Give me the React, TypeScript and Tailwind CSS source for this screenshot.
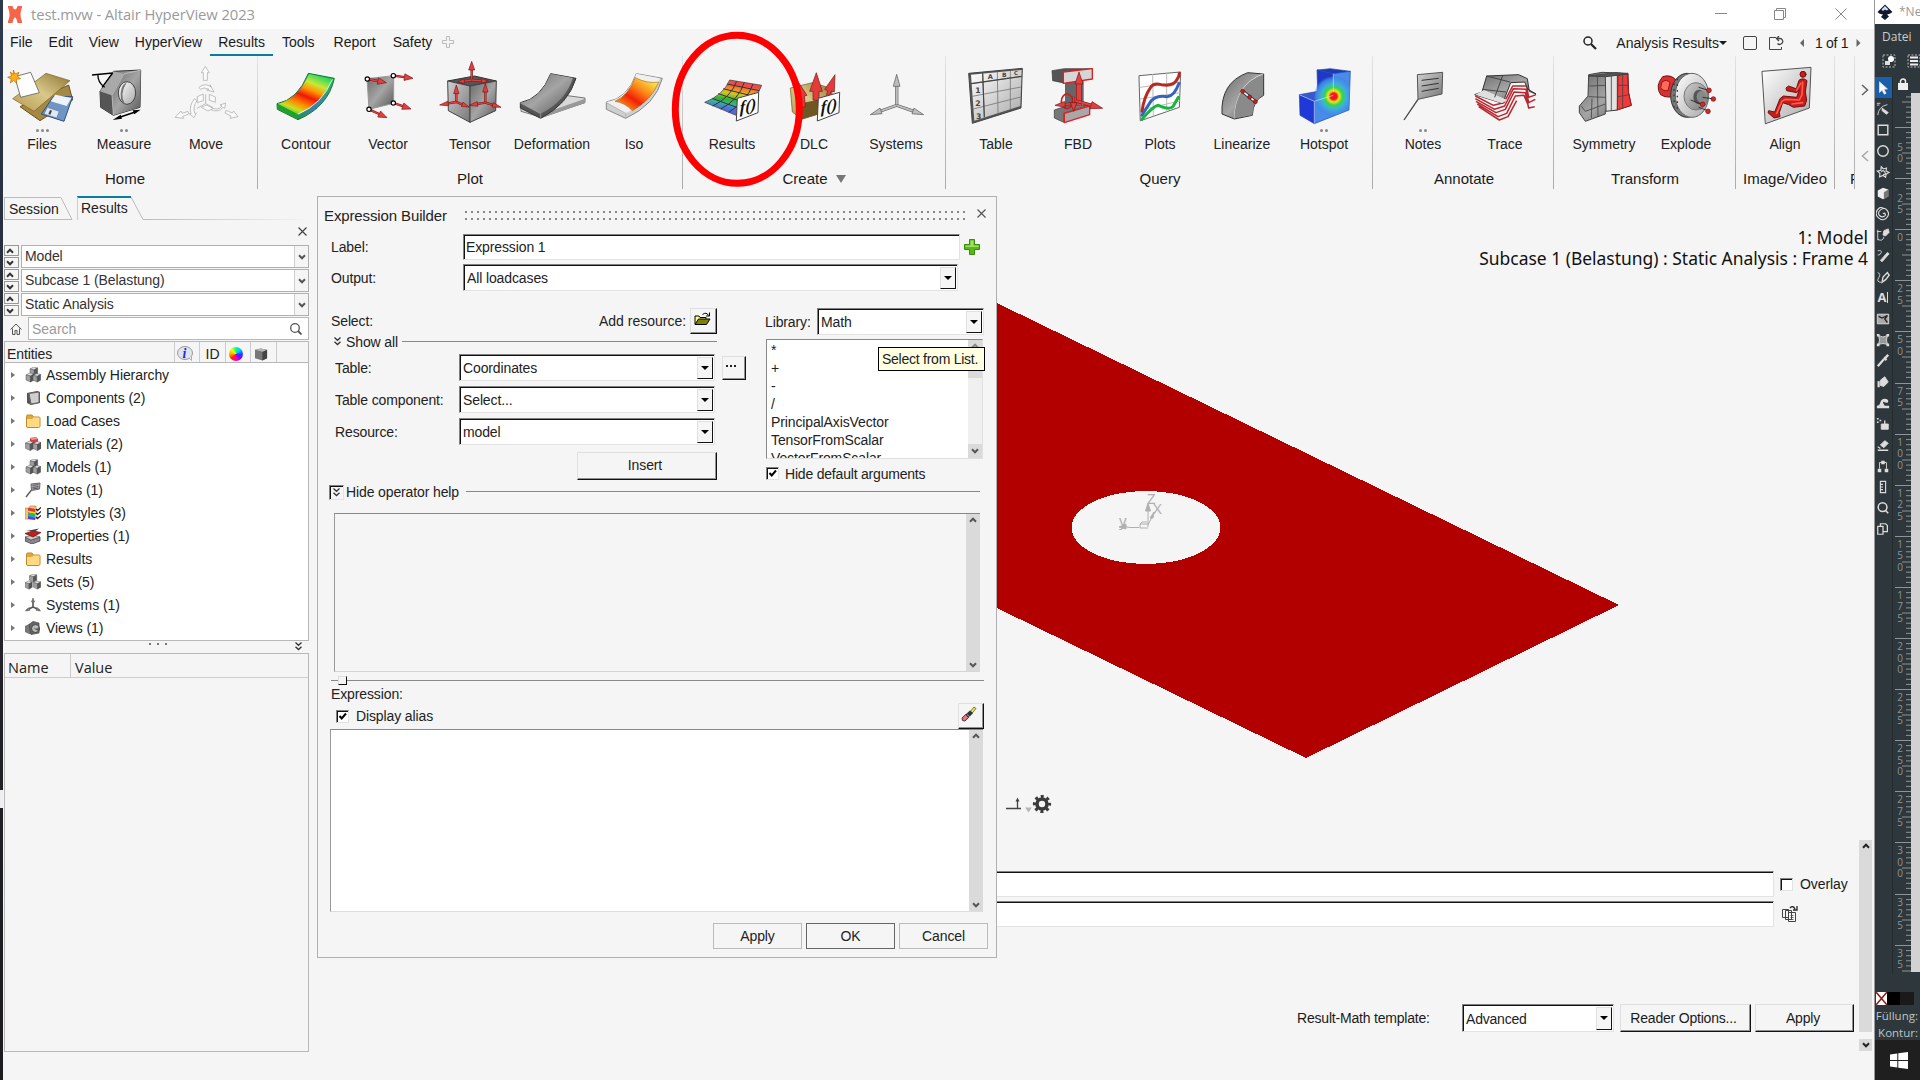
import React from "react";

type Kids = { children?: React.ReactNode };

/* ---------- shared controls ---------- */

const sunken =
  "border border-t-[#808080] border-l-[#808080] border-r-[#e3e3e3] border-b-[#e3e3e3] shadow-[inset_1px_1px_0_#111]";
const raised =
  "border border-t-[#e0e0e0] border-l-[#e0e0e0] border-r-[#111] border-b-[#111] shadow-[inset_-1px_-1px_0_#909090]";

function Caret({ className = "" }: { className?: string }) {
  return (
    <svg className={className} width="8" height="4" viewBox="0 0 8 4">
      <path d="M0 0h8L4 4z" fill="currentColor" />
    </svg>
  );
}

function Combo({ className, text }: { className: string; text: string }) {
  return (
    <div className={`flex bg-white pt-[2px] pl-[3px] pr-px pb-px text-[#222] ${sunken} ${className}`}>
      <div className="flex flex-1 items-center">{text}</div>
      <div className="flex w-[16px] items-center justify-center border border-[#e0e0e0] border-r-[#111] border-b-[#111] bg-[#f5f5f5] pr-px text-black">
        <Caret className="-mt-px" />
      </div>
    </div>
  );
}

function Chevron({ up = false, color = "#555" }: { up?: boolean; color?: string }) {
  return (
    <svg width="8" height="6" viewBox="0 0 9 7" className={up ? "" : "rotate-180"}>
      <path d="M1 5.500L4.500 2L8 5.500" fill="none" stroke={color} strokeWidth="2.300" />
    </svg>
  );
}

function ScrollBar() {
  return (
    <div className="flex w-[14px] shrink-0 flex-col items-center justify-between bg-[#dadada] py-[3px]">
      <Chevron up />
      <Chevron />
    </div>
  );
}

function CheckBox({ checked = true }: { checked?: boolean }) {
  return (
    <div className={`flex size-[13px] shrink-0 items-center justify-center bg-white ${sunken}`}>
      {checked && (
        <svg width="9" height="9" viewBox="0 0 9 9">
          <path d="M1.500 4L3.700 6.500L8 1.500" fill="none" stroke="#000" strokeWidth="2" />
        </svg>
      )}
    </div>
  );
}

function DoubleChevron() {
  return (
    <svg width="7" height="9" viewBox="0 0 7 9">
      <path d="M0.500 0.500L3.500 3.300L6.500 0.500M0.500 4.800L3.500 7.600L6.500 4.800" fill="none" stroke="#333" strokeWidth="1.300" />
    </svg>
  );
}

/* ---------- ribbon drawings ---------- */

function Defs() {
  return (
    <svg className="absolute size-0">
      <defs>
        <linearGradient id="steel" x1="0" y1="0" x2="1" y2="1">
          <stop offset="0" stopColor="#6a6a6a" />
          <stop offset="0.500" stopColor="#a5a5a5" />
          <stop offset="1" stopColor="#555" />
        </linearGradient>
        <linearGradient id="pale" x1="0" y1="0" x2="1" y2="1">
          <stop offset="0" stopColor="#fff" />
          <stop offset="1" stopColor="#a8a8a8" />
        </linearGradient>
        <linearGradient id="grey" x1="0" y1="0" x2="1" y2="1">
          <stop offset="0" stopColor="#d0d0d0" />
          <stop offset="1" stopColor="#777" />
        </linearGradient>
        <linearGradient id="manila" x1="0" y1="1" x2="1" y2="0">
          <stop offset="0" stopColor="#b89a4e" />
          <stop offset="0.500" stopColor="#d8c88a" />
          <stop offset="1" stopColor="#8f7430" />
        </linearGradient>
        <linearGradient id="heat" x1="0.150" y1="1" x2="0.700" y2="0">
          <stop offset="0" stopColor="#28b428" />
          <stop offset="0.180" stopColor="#c8e020" />
          <stop offset="0.320" stopColor="#f80" />
          <stop offset="0.500" stopColor="#f01808" />
          <stop offset="0.660" stopColor="#f90" />
          <stop offset="0.800" stopColor="#c8e838" />
          <stop offset="1" stopColor="#30d860" />
        </linearGradient>
        <linearGradient id="warm" x1="0" y1="1" x2="0.900" y2="0">
          <stop offset="0" stopColor="#ffd820" />
          <stop offset="0.400" stopColor="#f02008" />
          <stop offset="0.650" stopColor="#ff8a18" />
          <stop offset="1" stopColor="#f0ff60" />
        </linearGradient>
        <linearGradient id="rim" x1="0" y1="1" x2="1" y2="0">
          <stop offset="0" stopColor="#10a010" />
          <stop offset="0.500" stopColor="#3a80c0" />
          <stop offset="1" stopColor="#20c040" />
        </linearGradient>
        <linearGradient id="rainbow" x1="0.300" y1="1" x2="0.550" y2="0">
          <stop offset="0" stopColor="#5a5ae8" />
          <stop offset="0.200" stopColor="#5070d8" />
          <stop offset="0.340" stopColor="#38b0a0" />
          <stop offset="0.450" stopColor="#30b030" />
          <stop offset="0.620" stopColor="#d0c820" />
          <stop offset="0.780" stopColor="#f08030" />
          <stop offset="0.880" stopColor="#f04848" />
          <stop offset="1" stopColor="#f05050" />
        </linearGradient>
        <radialGradient id="spot" gradientUnits="userSpaceOnUse" cx="1178" cy="289" r="62">
          <stop offset="0.150" stopColor="#f01818" />
          <stop offset="0.270" stopColor="#f8e020" />
          <stop offset="0.430" stopColor="#30d848" />
          <stop offset="0.600" stopColor="#40b0d8" />
          <stop offset="0.850" stopColor="#4090e8" stopOpacity="0.800" />
          <stop offset="1" stopColor="#3a78e8" stopOpacity="0" />
        </radialGradient>
      </defs>
    </svg>
  );
}

/* Arrow with a shaft from (x1,y1) to a cone tip at (x2,y2) */
function Arrow({ x1, y1, x2, y2, w = 16, l = 26, s = 5, fill = "#e04040", edge = "#7a1515" }: {
  x1: number; y1: number; x2: number; y2: number; w?: number; l?: number; s?: number; fill?: string; edge?: string;
}) {
  const d = Math.hypot(x2 - x1, y2 - y1);
  const ux = (x2 - x1) / d;
  const uy = (y2 - y1) / d;
  const bx = x2 - ux * l;
  const by = y2 - uy * l;
  const h = w / 2;
  return (
    <g>
      <path d={`M${x1} ${y1}L${bx} ${by}`} stroke={edge} strokeWidth={s + 2} />
      <path d={`M${x1} ${y1}L${bx} ${by}`} stroke={fill} strokeWidth={s - 1} />
      <path
        d={`M${x2} ${y2}L${bx - uy * h} ${by + ux * h}L${bx + uy * h} ${by - ux * h}Z`}
        fill={fill}
        stroke={edge}
        strokeWidth="2"
      />
    </g>
  );
}

function FnCard({ x, y }: { x: number; y: number }) {
  return (
    <g transform={`translate(${x} ${y})`}>
      <path d="M1 14L65 -4L63 57L-2 82Z" fill="#fff" stroke="#444" strokeWidth="3" />
      <text x="8" y="61" transform="skewY(-14)" fontFamily="Liberation Serif" fontStyle="italic" fontWeight="bold" fontSize="50" fill="#111">
        f()
      </text>
    </g>
  );
}

const art: Record<string, { x: number; el: React.ReactNode }> = {
  Files: {
    x: 6,
    el: (
      <g strokeLinejoin="round">
        <path d="M60 320L120 362L218 300L206 255Z" fill="#a58842" stroke="#6b5422" strokeWidth="3" />
        <path d="M38 296L138 220L210 242L102 334Z" fill="url(#manila)" stroke="#7a6228" strokeWidth="2" />
        <path d="M160 290L218 290L192 364L124 342Z" fill="#6f95c4" stroke="#2f4f80" strokeWidth="3" />
        <path d="M166 284L214 294L200 318L152 304Z" fill="#eef3fa" />
        <path d="M142 322L178 334L170 354L132 342Z" fill="#e0e8f2" stroke="#55749c" strokeWidth="2" />
        <path d="M150 330L156 332L151 344L145 342Z" fill="#444" />
        <path d="M44 230L92 217L118 278L62 292Z" fill="#fff" stroke="#777" strokeWidth="3" />
        <path d="M40 210l5 12 12-5-5 12 10 7-13 2 1 12-9-9-10 8 3-12-11-5 12-4-4-12 9 7z" fill="#ffae1a" stroke="#b56a00" strokeWidth="2" />
      </g>
    ),
  },
  Measure: {
    x: 252,
    el: (
      <g strokeLinejoin="round">
        <path d="M300 274L340 214L422 210L420 322L340 346L302 322Z" fill="url(#steel)" stroke="#333" strokeWidth="3" />
        <path d="M300 274L336 286L340 346L302 322Z" fill="#555" />
        <path d="M336 286L372 222L422 210L420 322L340 346Z" fill="url(#steel)" />
        <path d="M336 286L372 222L422 210M336 286L340 346" fill="none" stroke="#ccc" strokeWidth="2" />
        <path d="M340 214L372 222L336 286L300 274Z" fill="#a9a9a9" />
        <ellipse cx="381" cy="279" rx="26" ry="34" fill="url(#pale)" stroke="#444" strokeWidth="3" />
        <path d="M381 246q-24 12-18 52 4 12 12 14-18-30 6-66z" fill="#777" />
        <path d="M276 225L338 219M294 224Q292 246 314 262M338 219L306 262" fill="none" stroke="#000" strokeWidth="4" />
        <path d="M352 354L408 335" stroke="#000" strokeWidth="5" />
        <path d="M338 360l24-16 4 12zM422 329l-24 2 5 12z" />
      </g>
    ),
  },
  Move: {
    x: 498,
    el: (
      <g fill="#fafafa" stroke="#b5b5b5" strokeWidth="2.500" strokeLinejoin="round">
        <path d="M616 199l12 19h-6v23h-12v-23h-6z" />
        <path d="M525 352l18-19 3 7 18-6 2 8-18 7 3 6z" />
        <path d="M714 350l-13-17-4 6-19-8-3 8 18 9-3 7z" />
        <path d="M597 262q18-15 36-1l-3-7 12 22-22-6 7-2q-14-8-26 0z" />
        <path d="M584 296q-18 20-11 46l-5-1 14 12 7-14-5 1q-6-20 7-38z" />
        <path d="M632 322q22 12 34-4l-6-3 17-6-3 16-5-3q-14 18-40 6z" />
        <path d="M592 290l18-8v20l-18 6zM628 283l18 8v16l-18-6zM604 322l16-7 20 10-16 8z" />
        <path d="M617 283v28l-26 14M617 311l22 12" fill="none" />
      </g>
    ),
  },
  Contour: {
    x: 798,
    el: (
      <g strokeLinejoin="round">
        <path d="M831 311Q893 300 925 220L1003 235Q985 320 894 359L832 328Z" fill="url(#rim)" stroke="#1a7a2a" strokeWidth="3" />
        <path d="M833 311Q893 300 927 222L995 237Q968 312 893 343Z" fill="url(#heat)" />
        <path d="M893 343Q968 312 997 238" fill="none" stroke="#fff" strokeWidth="3" opacity="0.850" />
        <path d="M832 314L893 343V358L832 328Z" fill="#20a030" />
      </g>
    ),
  },
  Vector: {
    x: 1041,
    el: (
      <g>
        <path d="M1098 236L1178 227V310L1104 328Z" fill="url(#steel)" stroke="#999" strokeWidth="3" />
        <Arrow x1={1100} y1={237} x2={1156} y2={248} w={20} />
        <Arrow x1={1178} y1={227} x2={1236} y2={235} w={20} />
        <Arrow x1={1104} y1={328} x2={1158} y2={353} w={20} />
        <Arrow x1={1178} y1={309} x2={1230} y2={327} w={20} />
        <g fill="#fff" stroke="#000" strokeWidth="3.500">
          <circle cx="1099" cy="237" r="6.500" />
          <circle cx="1177" cy="227" r="6.500" />
          <circle cx="1104" cy="328" r="6.500" />
          <circle cx="1177" cy="309" r="6.500" />
        </g>
      </g>
    ),
  },
  Tensor: {
    x: 1287,
    el: (
      <g strokeLinejoin="round">
        <path d="M1340 243L1420 228L1486 243L1407 258Z" fill="#555" stroke="#333" strokeWidth="3" />
        <path d="M1340 243L1407 258V367L1342 332Z" fill="url(#grey)" stroke="#444" strokeWidth="3" />
        <path d="M1407 258L1486 243L1484 332L1407 367Z" fill="url(#steel)" stroke="#444" strokeWidth="3" />
        <Arrow x1={1412} y1={242} x2={1412} y2={184} w={18} />
        <Arrow x1={1412} y1={240} x2={1370} y2={246} w={14} l={20} />
        <Arrow x1={1412} y1={240} x2={1462} y2={244} w={14} l={20} />
        <Arrow x1={1366} y1={308} x2={1366} y2={255} w={16} />
        <Arrow x1={1366} y1={306} x2={1316} y2={315} w={14} />
        <Arrow x1={1366} y1={306} x2={1404} y2={321} w={14} l={22} />
        <Arrow x1={1453} y1={308} x2={1453} y2={250} w={16} />
        <Arrow x1={1453} y1={308} x2={1404} y2={316} w={14} />
        <Arrow x1={1453} y1={308} x2={1500} y2={322} w={14} />
      </g>
    ),
  },
  Deformation: {
    x: 93,
    el: (
      <g strokeLinejoin="round">
        <path d="M120 318L245 285L312 294V308L182 352L120 334Z" fill="#d8d8d8" stroke="#777" strokeWidth="3" />
        <path d="M182 342L312 296V308L182 354Z" fill="#999" />
        <path d="M118 308Q180 296 209 221L285 235Q262 312 179 355L118 324Z" fill="#555" stroke="#333" strokeWidth="3" />
        <path d="M118 308Q180 296 209 221L276 234Q252 306 179 341Z" fill="url(#steel)" />
        <path d="M118 309L179 341V355" fill="none" stroke="#aaa" strokeWidth="2" />
      </g>
    ),
  },
  Iso: {
    x: 339,
    el: (
      <g strokeLinejoin="round">
        <path d="M376 306Q440 296 466 221L544 235Q524 314 434 355L376 328Z" fill="#cfcfcf" stroke="#888" strokeWidth="3" />
        <path d="M376 306Q440 296 466 221L537 235Q510 306 434 340Z" fill="#f0f0f0" />
        <path d="M402 304Q442 286 463 233Q500 252 533 246Q512 300 454 332Q432 308 402 304Z" fill="url(#warm)" stroke="#b86a10" strokeWidth="2" />
        <path d="M376 308L434 340V355" fill="none" stroke="#aaa" strokeWidth="2" />
      </g>
    ),
  },
  Results: {
    x: 636,
    el: (
      <g>
        <path d="M674 307Q730 285 749 240L845 256Q826 310 768 346Z" fill="url(#rainbow)" stroke="#333" strokeWidth="2" />
        <path
          d="M698 318Q752 292 770 244M722 327Q776 300 793 247M746 337Q800 305 819 252M697 295Q740 312 786 327M715 281Q760 298 806 309M730 266Q776 278 826 290M741 252L838 272"
          fill="none"
          stroke="#333"
          strokeWidth="3"
        />
        <FnCard x={771} y={281} />
      </g>
    ),
  },
  DLC: {
    x: 885,
    el: (
      <g strokeLinejoin="round">
        <path d="M934 264L1000 248L1060 266L1056 330L968 358L940 336Z" fill="url(#manila)" stroke="#6b5422" strokeWidth="2" />
        <path d="M968 310L1030 296V340L968 358Z" fill="#6e5722" />
        <path d="M1002 300v-26h-10l20-56 18 56h-10v28z" fill="#e23b3b" stroke="#7a1515" strokeWidth="2" />
        <path d="M1042 288l4-16-9-4 31-44-2 52-9-3-4 14z" fill="#e23b3b" stroke="#7a1515" strokeWidth="2" />
        <path d="M966 322l-4-36-10 2-2-54 34 52-8 2 3 32z" fill="#e23b3b" stroke="#7a1515" strokeWidth="2" />
        <FnCard x={1017} y={281} />
      </g>
    ),
  },
  Systems: {
    x: 1128,
    el: (
      <g>
        <Arrow x1={1250} y1={316} x2={1250} y2={223} w={20} l={36} s={8} fill="#bdbdbd" edge="#555" />
        <Arrow x1={1250} y1={316} x2={1171} y2={344} w={18} l={34} s={7} fill="#bdbdbd" edge="#555" />
        <Arrow x1={1250} y1={316} x2={1331} y2={344} w={18} l={34} s={7} fill="#bdbdbd" edge="#555" />
      </g>
    ),
  },
  Table: {
    x: 48,
    el: (
      <g strokeLinejoin="round">
        <path d="M86 220L247 205L243 324L97 370Z" fill="#555" stroke="#444" strokeWidth="3" />
        <path d="M93 224L245 210L241 318L103 362Z" fill="url(#pale)" />
        <path
          d="M94 251L245 229M97 289L243 261M100 327L242 291M128 220L133 352M172 216L174 341M211 213L211 328"
          stroke="#777"
          strokeWidth="2.500"
          fill="none"
        />
        <path d="M94 251L245 229M128 220L133 352" stroke="#444" strokeWidth="3.500" />
        <g fontFamily="DejaVu Sans" fontWeight="bold" fill="#444">
          <text x="143" y="238" fontSize="20">A</text>
          <text x="186" y="232" fontSize="18">B</text>
          <text x="222" y="226" fontSize="16">C</text>
          <text x="106" y="279" fontSize="23">1</text>
          <text x="106" y="318" fontSize="23">2</text>
          <text x="108" y="357" fontSize="23">3</text>
        </g>
      </g>
    ),
  },
  FBD: {
    x: 291,
    el: (
      <g strokeLinejoin="round">
        <path d="M372 246L398 242L428 240V312L372 318Z" fill="#666" />
        <path d="M333 212L370 206L455 206L368 216V249L335 242Z" fill="#555" stroke="#333" strokeWidth="2" />
        <path d="M367 216L454 206V237L367 250Z" fill="#d6d6d6" stroke="#e02020" strokeWidth="4" />
        <path d="M340 330L376 318L448 314L368 340V367L340 354Z" fill="#777" stroke="#333" strokeWidth="2" />
        <path d="M370 340L446 318V344L370 368Z" fill="#a8a8a8" stroke="#e02020" strokeWidth="4" />
        <ellipse cx="378" cy="304" rx="17" ry="22" fill="none" stroke="#c02020" strokeWidth="5" />
        <Arrow x1={414} y1={316} x2={414} y2={216} w={24} l={36} s={15} />
        <Arrow x1={405} y1={303} x2={485} y2={325} w={22} l={36} s={8} />
        <Arrow x1={405} y1={310} x2={342} y2={316} w={18} l={30} s={6} />
        <Arrow x1={398} y1={290} x2={398} y2={334} w={20} l={26} s={6} />
      </g>
    ),
  },
  Plots: {
    x: 540,
    el: (
      <g strokeLinejoin="round" strokeLinecap="round">
        <path d="M598 227L722 216L718 322L602 362Z" fill="#fff" stroke="#666" strokeWidth="3" />
        <path d="M600 262L720 246M601 297L720 278M602 330L719 303M638 223L640 348M680 219L680 334" stroke="#bbb" strokeWidth="3" fill="none" />
        <g fill="none">
          <path d="M606 334Q612 290 632 262Q640 248 664 254Q700 260 710 240Q718 230 718 220" stroke="#b82a20" strokeWidth="9" />
          <path d="M606 346Q622 320 634 302Q652 284 682 290Q702 290 717 250" stroke="#3464c0" strokeWidth="9" />
          <path d="M606 358Q640 318 655 316Q690 332 700 318L715 292" stroke="#18b440" strokeWidth="9" />
        </g>
      </g>
    ),
  },
  Linearize: {
    x: 783,
    el: (
      <g strokeLinejoin="round">
        <path d="M843 342Q838 248 920 218L968 222V286Q936 300 934 346L880 357Z" fill="url(#steel)" stroke="#333" strokeWidth="3" />
        <path d="M880 355Q884 252 966 222" fill="none" stroke="#ddd" strokeWidth="3" />
        <path d="M880 355Q884 252 966 224V286Q936 300 934 346Z" fill="#8a8a8a" />
        <path d="M905 274L943 305" stroke="#222" strokeWidth="10" />
        <path d="M905 274L943 305" stroke="#fff" strokeWidth="5" />
        <g fill="#c82020" stroke="#701010" strokeWidth="2">
          <circle cx="905" cy="274" r="6" />
          <circle cx="926" cy="291" r="6" />
          <circle cx="943" cy="305" r="6" />
        </g>
      </g>
    ),
  },
  Hotspot: {
    x: 1029,
    el: (
      <g strokeLinejoin="round" stroke="#1a48a8" strokeWidth="2">
        <path d="M1128 210L1168 206L1228 214L1177 221Z" fill="#2038b8" />
        <path d="M1128 210L1177 221V285L1130 276Z" fill="#2038c8" />
        <path d="M1177 221L1228 214L1224 330L1120 371V304L1177 285Z" fill="#4a8ae8" />
        <path d="M1075 284L1130 274L1177 286L1120 304Z" fill="#3858d0" />
        <path d="M1075 284L1120 304V371L1077 346Z" fill="#2038d8" />
        <path d="M1128 240L1228 214L1224 330L1120 371V290Z" fill="url(#spot)" stroke="none" />
        <path d="M1075 284L1120 304L1177 286M1120 304V371M1177 221V276" fill="none" stroke="#cfe4ff" />
      </g>
    ),
  },
  Notes: {
    x: -51,
    el: (
      <g>
        <path d="M12 360L54 298" stroke="#444" strokeWidth="4" />
        <path d="M52 224L128 217L126 282L54 298Z" fill="url(#grey)" stroke="#555" strokeWidth="3" />
        <path d="M65 241L116 235M65 258L116 250M65 274L116 265" stroke="#333" strokeWidth="3" />
      </g>
    ),
  },
  Trace: {
    x: 195,
    el: (
      <g strokeLinejoin="round" fill="none">
        <path
          d="M226 288L280 316L312 308L338 258L380 258L386 292L408 284M226 296L284 328L314 318L340 266L378 268L386 308L406 298M228 304L288 338L316 328L342 276L376 278L386 324L404 320M232 312L294 350L320 340L346 288L372 286L384 314M236 320L298 360L324 350L350 302"
          stroke="#b82830"
          strokeWidth="4.500"
        />
        <path d="M260 228L356 224L382 236L388 274L408 282L384 268L374 246L332 248L308 310L224 284L246 276Z" fill="url(#steel)" stroke="#333" strokeWidth="3" />
        <path d="M226 284L306 310L322 300L252 270Z" fill="#e0e0e0" />
        <path d="M247 268L318 276M308 227L284 292M260 228L330 246" stroke="#444" strokeWidth="3" />
      </g>
    ),
  },
  Symmetry: {
    x: 492,
    el: (
      <g strokeLinejoin="round" stroke="#444" strokeWidth="3">
        <path d="M566 224L606 217L684 220L686 278L694 316L650 330L616 332L616 342L556 364L538 338V318L564 288Z" fill="url(#steel)" />
        <path d="M616 228L652 226V330L618 334Z" fill="#e2e2e2" />
        <path d="M654 226L683 220L685 276L694 316L652 330Z" fill="#ee3a3a" stroke="#a01818" />
        <path
          d="M592 228L594 350M568 258L616 256M566 290L616 292M544 318L556 334L616 312M654 256H684M654 290L688 284M668 224V326M576 296L574 354M634 228V332"
          fill="none"
          strokeWidth="2.500"
        />
        <path d="M566 228L648 218L684 222L616 230Z" fill="#555" />
      </g>
    ),
  },
  Explode: {
    x: 738,
    el: (
      <g>
        <path d="M788 230Q812 222 828 240L826 288Q800 296 782 284Q764 258 788 230Z" fill="#dc3030" stroke="#701010" strokeWidth="3" />
        <path d="M786 246q14-10 24 2l-6 24q-18 2-22-10z" fill="#ff6a5a" stroke="#8a1616" strokeWidth="3" />
        <ellipse cx="862" cy="286" rx="50" ry="66" fill="#777" stroke="#333" strokeWidth="3" />
        <ellipse cx="876" cy="286" rx="50" ry="66" fill="url(#pale)" stroke="#666" strokeWidth="3" />
        <path d="M822 250v76M832 236v102" stroke="#333" strokeWidth="4" strokeDasharray="5 12" />
        <ellipse cx="888" cy="289" rx="36" ry="41" fill="url(#grey)" stroke="#777" strokeWidth="3" />
        <ellipse cx="897" cy="291" rx="17" ry="22" fill="#555" />
        <ellipse cx="904" cy="290" rx="14" ry="18" fill="#888" />
        <path d="M896 262l26 8M908 292l28 4M872 300l30 12M896 322l22 8" stroke="#333" strokeWidth="3" />
        <g fill="#d82828" stroke="#701010" strokeWidth="2">
          <circle cx="927" cy="271" r="7" />
          <circle cx="940" cy="297" r="7" />
          <circle cx="908" cy="313" r="7" />
          <circle cx="924" cy="334" r="7" />
        </g>
      </g>
    ),
  },
  Align: {
    x: 1035,
    el: (
      <g strokeLinejoin="round" strokeLinecap="round">
        <path d="M1087 214L1233 202L1228 324L1097 371Z" fill="url(#pale)" stroke="#555" strokeWidth="3" />
        <circle cx="1209" cy="223" r="9" fill="#c81c1c" stroke="#701010" strokeWidth="3" />
        <path d="M1198 240Q1210 232 1221 242L1216 276L1220 300L1214 318L1180 322L1166 314L1148 308L1138 338L1140 350L1122 354L1104 338L1106 332L1124 336L1140 296L1150 288L1190 292L1198 270L1190 278L1160 272L1158 264L1166 258L1188 266Z" fill="#c81c1c" stroke="#701010" strokeWidth="3" />
        <path d="M1208 246L1206 284L1198 300L1156 298L1146 304L1130 340M1202 250L1190 270M1176 312L1208 308" fill="none" stroke="#ff5a4a" strokeWidth="5" />
      </g>
    ),
  },
};

function Tool({ name, dots = 0, first = false }: { name: string; dots?: number; first?: boolean }) {
  const a = art[name];
  return (
    <div className={`flex flex-col items-center ${first ? "w-[80px] pr-[2px]" : "w-[82px]"}`}>
      <svg width="80" height="70" viewBox={`${a.x} 180 240 210`} className="-mb-px shrink-0">
        {a.el}
      </svg>
      <div className="flex h-[3px] gap-[2px]">
        {Array.from({ length: dots }, (_, i) => (
          <i key={i} className="size-[3px] rounded-full bg-[#888]" />
        ))}
      </div>
      <div className="mt-[4px] leading-[17px] text-[#222]">{name}</div>
    </div>
  );
}

function Group({ label, menu, children }: Kids & { label: string; menu?: boolean }) {
  return (
    <div className="flex shrink-0 flex-col pt-1">
      <div className="flex h-[110px]">{children}</div>
      <div className="flex w-0 min-w-full items-center justify-center gap-2 text-[15px] leading-[18px] whitespace-nowrap">
        {label}
        {menu && (
          <svg width="10" height="8" viewBox="0 0 10 8">
            <path d="M0 0h10L5 8z" fill="#777" />
          </svg>
        )}
      </div>
    </div>
  );
}

function Sep({ className }: { className: string }) {
  return (
    <div className={`flex shrink-0 justify-center ${className}`}>
      <div className="h-[133px] w-px bg-linear-to-b from-[#e4e4e4] via-[#c4c4c4] to-[#aaa]" />
    </div>
  );
}

/* ---------- window chrome ---------- */

function TitleBar() {
  return (
    <div className="flex h-[29px] shrink-0 items-center bg-white pr-[15px] pl-[5px] font-['Open_Sans',sans-serif] text-[14.800px] text-[#9a9a9a]">
      <svg width="14" height="17" viewBox="0 0 14 17">
        <path d="M0 0h4.500Q5.500 3.500 7 3.500T9.500 0H14v1.500q-3 7 0 14V17H9.500Q8.500 11.500 7 11.500T4.500 17H0v-1.500q3-7 0-14z" fill="#f6644a" />
      </svg>
      <span className="ml-[9px] flex-1 tracking-[-0.090px]">test.mvw - Altair HyperView 2023</span>
      <svg width="150" height="29" viewBox="0 0 150 29" fill="none" stroke="#888">
        <path d="M6 13.500h12M65.500 10.500h9v9h-9zM67.500 10.500v-2h9v9h-2M126.500 8.500l11 11M137.500 8.500l-11 11" />
      </svg>
    </div>
  );
}

function MenuBar() {
  const items: [string, string][] = [
    ["File", ""],
    ["Edit", ""],
    ["View", ""],
    ["HyperView", ""],
    ["Results", ""],
    ["Tools", "ml-[1px]"],
    ["Report", "ml-[3px]"],
    ["Safety", "ml-px"],
  ];
  return (
    <div className="flex h-[27px] shrink-0 items-stretch">
      <div className="-ml-px flex">
        {items.map(([t, gap]) => (
          <div
            key={t}
            className={`flex items-center border-b-2 px-2 pt-[2px] pb-px ${gap} ${t === "Results" ? "border-[#0b7c9b]" : "border-transparent"}`}
          >
            {t}
          </div>
        ))}
      </div>
      <svg className="mt-[7px] ml-[2px]" width="12" height="12" viewBox="0 0 12 12" fill="none" stroke="#bbb">
        <path d="M4.500 0.500h3v4h4v3h-4v4h-3v-4h-4v-3h4z" />
      </svg>
      <div className="mr-[13px] ml-auto flex items-center">
        <svg width="14" height="14" viewBox="0 0 14 14" fill="none" stroke="#222">
          <circle cx="5" cy="5" r="4" strokeWidth="1.500" />
          <path d="M8 8l5 5" strokeWidth="2.200" />
        </svg>
        <span className="ml-[19px]">Analysis Results</span>
        <Caret />
        <span className="ml-[16px] size-[14px] rounded-[2px] border border-[#444]" />
        <svg className="ml-[12px]" width="15" height="14" viewBox="0 0 15 14" fill="none" stroke="#444">
          <path d="M7 1.500H0.500v12h12V11" />
          <path d="M8 2.500h3a3 3 0 1 1-2.500 5M10 0L7.500 2.500L10 5" strokeWidth="1.300" />
        </svg>
        <svg className="ml-[16px]" width="4" height="8" viewBox="0 0 4 8">
          <path d="M4 0v8L0 4z" fill="#666" />
        </svg>
        <span className="ml-[11px] w-[41px] whitespace-nowrap tracking-[-0.300px]">1 of 1</span>
        <svg width="5" height="8" viewBox="0 0 4 8">
          <path d="M0 0v8l4-4z" fill="#666" />
        </svg>
      </div>
    </div>
  );
}

function Ribbon() {
  return (
    <div className="flex h-[134px] shrink-0">
      <Group label="Home">
        <Tool name="Files" dots={3} first />
        <Tool name="Measure" dots={2} />
        <Tool name="Move" />
      </Group>
      <Sep className="w-[18px] pl-[2px]" />
      <Group label="Plot">
        <Tool name="Contour" />
        <Tool name="Vector" />
        <Tool name="Tensor" />
        <Tool name="Deformation" />
        <Tool name="Iso" />
      </Group>
      <Sep className="w-[16px] pr-[2px]" />
      <Group label="Create" menu>
        <Tool name="Results" />
        <Tool name="DLC" />
        <Tool name="Systems" />
      </Group>
      <Sep className="w-[18px] pr-[2px]" />
      <Group label="Query">
        <Tool name="Table" />
        <Tool name="FBD" />
        <Tool name="Plots" />
        <Tool name="Linearize" />
        <Tool name="Hotspot" dots={2} />
      </Group>
      <Sep className="w-[17px] pr-[2px]" />
      <Group label="Annotate">
        <Tool name="Notes" dots={2} />
        <Tool name="Trace" />
      </Group>
      <Sep className="w-[17px] pr-[2px]" />
      <Group label="Transform">
        <Tool name="Symmetry" />
        <Tool name="Explode" />
      </Group>
      <Sep className="w-[17px] pr-px" />
      <Group label="Image/Video">
        <Tool name="Align" />
      </Group>
      <Sep className="w-[16px]" />
      <div className="flex w-[12px] items-start overflow-hidden pt-[114px] pl-[8px] text-[15px] leading-[18px]">F</div>
      <Sep className="w-px" />
      <div className="flex flex-1 flex-col items-center pt-[28px]">
        <svg width="8" height="12" viewBox="0 0 8 12" fill="none" stroke="#666" strokeWidth="1.600">
          <path d="M1 1l5.500 5L1 11" />
        </svg>
        <svg className="mt-[54px]" width="8" height="12" viewBox="0 0 8 12" fill="none" stroke="#aaa" strokeWidth="1.600">
          <path d="M7 1L1.500 6L7 11" />
        </svg>
      </div>
    </div>
  );
}

/* ---------- browser panel ---------- */

function Selector({ text }: { text: string }) {
  return (
    <div className="flex h-[23px] gap-[2px] text-[14px]">
      <div className="flex w-[15px] flex-col gap-px">
        <span className="flex flex-1 items-center justify-start border border-[#999] pl-px"><Chevron up color="#333" /></span>
        <span className="flex flex-1 items-center justify-start border border-[#999] pl-px"><Chevron color="#333" /></span>
      </div>
      <div className="flex flex-1 border border-[#b0b0b0] bg-white">
        <span className="flex-1 pl-[3px] leading-[21px] tracking-[-0.100px] text-[#333]">{text}</span>
        <span className="flex w-[14px] items-center justify-center border-l border-[#ccc] bg-[#f5f5f5]"><Chevron /></span>
      </div>
    </div>
  );
}

function Cube({ x, y, s }: { x: number; y: number; s: number }) {
  return (
    <g transform={`translate(${x} ${y}) scale(${s})`}>
      <path d="M0 2L4 0L8 1L4.500 3z" fill="#e0e0e0" stroke="#555" strokeWidth="0.500" />
      <path d="M0 2L4.500 3V9L0 7z" fill="#a0a0a0" stroke="#555" strokeWidth="0.500" />
      <path d="M4.500 3L8 1V7L4.500 9z" fill="#555" stroke="#444" strokeWidth="0.500" />
    </g>
  );
}

const folder = (
  <>
    <path d="M1.500 3.500q0-1.500 1-1.500H7l1.500 2H14q1 0 1 1v8q0 1.500-1.500 1.500h-11q-1 0-1-1.500z" fill="#e0a83c" stroke="#c08a28" />
    <path d="M2 6h5l1.500-1.500H14.500V13.500q0 .5-1 .5H3q-1 0-1-1z" fill="#ffd983" />
  </>
);

const treeArt: Record<string, React.ReactNode> = {
  blocks: (
    <>
      <Cube x={5} y={0} s={0.95} />
      <Cube x={1} y={6} s={1} />
      <Cube x={8} y={6.5} s={0.95} />
    </>
  ),
  plate: (
    <>
      <path d="M2 3L12 1L15 2V13L6 15L2 13z" fill="#555" />
      <path d="M4 3.500L14 2V12.500L6 14z" fill="#cfcfcf" stroke="#666" />
    </>
  ),
  folder,
  materials: (
    <>
      <path d="M5 2L11 1L13 3V9L5 9z" fill="#d04040" />
      <path d="M5 2L11 1L13 3L7 4z" fill="#f09090" />
      <Cube x={0.5} y={5} s={1.05} />
      <Cube x={8} y={5.5} s={1} />
    </>
  ),
  note: (
    <>
      <path d="M1 15L6.500 8" stroke="#555" strokeWidth="1.300" />
      <path d="M6 2L15 1L14.500 7L6.500 8.500z" fill="#b0b0b0" stroke="#666" />
      <path d="M7.500 3.500l6-1M7.500 5.500l6-1M7.500 7l6-1" stroke="#333" strokeWidth="0.700" />
    </>
  ),
  plot: (
    <>
      <path d="M0 3h4l1-2h6v13H0z" fill="#f0c468" stroke="#c08a28" strokeWidth="0.700" />
      <path d="M3 3l7 1v11l-7-1z" fill="#6040d0" />
      <path d="M3 3l7 1v3l-7-1.500z" fill="#e83030" />
      <path d="M3 5.500l7 1.500v2L3 7.500z" fill="#f0d020" />
      <path d="M3 7.500l7 1.500v2L3 9.500z" fill="#30c040" />
      <path d="M3 9.500l7 1.500v2l-7-2z" fill="#30a0e0" />
      <path d="M11 4l1.500 1.500L16 2.500M11 8l1.500 1.500L16 6.500M11 12l1.500 1.500L16 10.500" fill="none" stroke="#222" strokeWidth="1.300" />
    </>
  ),
  property: (
    <>
      <path d="M0 9l6 3 9-3v4l-8 3-7-3z" fill="#888" stroke="#333" strokeWidth="0.700" />
      <path d="M0 9l8-2 7 2-9 3z" fill="#ccc" stroke="#444" strokeWidth="0.600" />
      <path d="M0 5.500l8-2.500 8 1.500-8 4.500z" fill="#c02020" stroke="#601010" strokeWidth="0.700" />
      <path d="M1 3l8-1.500 5-1-4 3z" fill="#444" />
    </>
  ),
  sets: (
    <>
      <Cube x={4.5} y={0} s={0.9} />
      <Cube x={0} y={7} s={0.9} />
      <Cube x={8.5} y={7} s={0.9} />
    </>
  ),
  axes: (
    <g fill="none" stroke="#555">
      <path d="M8 10V3M8 10L1.500 13M8 10l6.500 3" strokeWidth="1.600" />
      <path d="M6.500 5L8 1l1.500 4zM4 10.500L0.500 14l4.500-.8zM12 10.500l3.500 3.500-4.500-.8z" fill="#888" strokeWidth="0.600" />
    </g>
  ),
  camera: (
    <>
      <path d="M0 6l4-2 2 1V14L4 14L0 12z" fill="#777" />
      <path d="M4 4.500L8 1.500L14 3V13L6 14.500z" fill="#666" stroke="#444" strokeWidth="0.700" />
      <circle cx="10.500" cy="8.500" r="4" fill="#bbb" stroke="#444" />
      <path d="M8.500 8.500h4l2-2v5l-2-1" fill="#555" />
    </>
  ),
};

const tree: [string, string][] = [
  ["Assembly Hierarchy", "blocks"],
  ["Components (2)", "plate"],
  ["Load Cases", "folder"],
  ["Materials (2)", "materials"],
  ["Models (1)", "blocks"],
  ["Notes (1)", "note"],
  ["Plotstyles (3)", "plot"],
  ["Properties (1)", "property"],
  ["Results", "folder"],
  ["Sets (5)", "sets"],
  ["Systems (1)", "axes"],
  ["Views (1)", "camera"],
];

function Browser() {
  return (
    <div className="flex w-[307px] shrink-0 flex-col pt-[6px] pl-px text-[14px] text-[#222]">
      <div className="flex h-[24px]">
        <div className="mt-px flex h-[23px]">
          <div className="w-[57px] border-t border-b border-l border-[#bbb] pl-[4px] leading-[22px]">Session</div>
          <svg width="12" height="23" viewBox="0 0 12 23" fill="none" stroke="#bbb">
            <path d="M0 0.500L11 22.500H0" />
          </svg>
        </div>
        <div className="ml-[4px] w-[54px] border-t-2 border-l border-t-[#0b7c9b] border-l-[#ccc] pl-[3px] leading-[20px]">Results</div>
        <svg width="12" height="24" viewBox="0 0 12 24" fill="none" stroke="#bbb">
          <path d="M0 1L12 23.500" />
        </svg>
        <div className="h-[24px] flex-1 bg-linear-to-r from-[#bbb] to-[#f5f5f5] pb-px">
          <div className="h-full bg-[#f5f5f5]" />
        </div>
      </div>
      <div className="flex h-[25px] items-center justify-end pr-[3px]">
        <svg className="-mt-[3px]" width="9" height="9" viewBox="0 0 9 9" fill="none" stroke="#444" strokeWidth="1.200">
          <path d="M0.500 0.500l8 8M8.500 0.500l-8 8" />
        </svg>
      </div>
      <div className="flex w-[305px] flex-col gap-px">
        <Selector text="Model" />
        <Selector text="Subcase 1 (Belastung)" />
        <Selector text="Static Analysis" />
      </div>
      <div className="mt-px flex h-[23px] w-[305px] items-center">
        <svg className="mx-[6px]" width="12" height="12" viewBox="0 0 12 12" fill="none" stroke="#555">
          <path d="M0.500 6.500L6 1l5.500 5.500M2.500 5.500v6h2.500v-4h2v4h2.500v-6" />
        </svg>
        <div className="flex h-[23px] flex-1 items-center border border-[#b8b8b8] bg-white pr-[6px] pl-[3px] text-[#999]">
          <span className="flex-1">Search</span>
          <svg width="12" height="12" viewBox="0 0 12 12" fill="none" stroke="#555">
            <circle cx="5" cy="5" r="4.300" strokeWidth="1.300" />
            <path d="M8 8l3.500 3.500" strokeWidth="1.800" />
          </svg>
        </div>
      </div>
      <div className="mt-px h-[300px] w-[305px] border border-[#b8b8b8] bg-white">
        <div className="flex h-[21px] items-center border-b border-[#b8b8b8] bg-[#f5f5f5]">
          <span className="flex-1 pt-[3px] pl-[2px] tracking-[-0.100px]">Entities</span>
          <span className="flex h-full w-[25px] items-center justify-center border-l border-[#ccc] pt-[3px] pr-[4px]">
            <svg width="17" height="15" viewBox="0 0 17 15">
              <ellipse cx="8" cy="7" rx="7.500" ry="6.500" fill="#dfe4f0" stroke="#999" />
              <path d="M12 12l2.500 2.500V10" fill="#dfe4f0" stroke="#999" strokeWidth="0.700" />
              <text x="5.500" y="12" fontFamily="Liberation Serif" fontStyle="italic" fontWeight="bold" fontSize="14" fill="#2030d0">i</text>
            </svg>
          </span>
          <span className="flex h-full w-[26px] items-center justify-center border-l border-[#ccc] pt-[3px]">ID</span>
          <span className="flex h-full w-[25px] items-center justify-center border-l border-[#ccc] pt-[3px] pr-[4px]">
            <span className="size-[14px] rounded-full bg-[conic-gradient(#0f8,#0cf,#24f,#80f,#f0a,#f20,#fa0,#ef0,#0f8)]" />
          </span>
          <span className="flex h-full w-[26px] items-center justify-center border-l border-[#ccc] pt-[4px] pr-[4px]">
            <svg width="13" height="13" viewBox="0 0 14 14">
              <path d="M0 2L6 0.500L13 2V11L8 13.500L0 11z" fill="#777" />
              <path d="M8 4L13 2V11L8 13.500z" fill="#444" />
              <path d="M0 2L6 .5L13 2L8 4z" fill="#b5b5b5" />
            </svg>
          </span>
          <span className="h-full w-[32px] border-l border-[#ccc]" />
        </div>
        {tree.map(([label, icon]) => (
          <div key={label} className="flex h-[23px] items-center">
            <svg className="ml-[6px]" width="4" height="6" viewBox="0 0 4 6">
              <path d="M0 0v6l4-3z" fill="#777" />
            </svg>
            <svg className="ml-[10px]" width="16" height="16" viewBox="0 0 16 16">
              {treeArt[icon]}
            </svg>
            <span className="ml-[5px] tracking-[-0.080px]">{label}</span>
          </div>
        ))}
      </div>
      <div className="flex h-[12px] w-[305px] items-start justify-end pt-px pr-[7px]">
        <div className="mt-px mr-[128px] flex gap-[6px]">
          <i className="size-[2px] bg-[#777]" />
          <i className="size-[2px] bg-[#777]" />
          <i className="size-[2px] bg-[#777]" />
        </div>
        <DoubleChevron />
      </div>
      <div className="h-[399px] w-[305px] border border-[#b8b8b8]">
        <div className="flex h-[24px] border-b border-[#ccc] font-['Open_Sans',sans-serif] text-[14.500px] leading-[27px]">
          <div className="w-[66px] border-r border-[#ccc] pl-[3px]">Name</div>
          <div className="pl-[4px]">Value</div>
        </div>
      </div>
    </div>
  );
}

/* ---------- graphics area ---------- */

function Viewport() {
  return (
    <div className="relative h-[650px] overflow-hidden">
      <svg className="absolute inset-0" width="1564" height="650" viewBox="310 190 1564 650" shapeRendering="crispEdges">
        <path d="M900 256L1619 605L1306 758L900 561Z" fill="#b20000" />
        <ellipse cx="1146" cy="527.500" rx="74.500" ry="36.500" fill="#f5f5f5" />
      </svg>
      <svg className="absolute top-[280px] left-[800px]" width="80" height="80" viewBox="1110 470 80 80" fill="none" stroke="#b0b0b0">
        <path d="M1148 527V507M1148 528h-8v-4h8M1140 524l2-2h5M1139 527.500h-9l-6-1M1148 525l5-10" />
        <path d="M1145.500 511l2.500-8 2.500 8zM1150 518l4-6-1 6zM1126 524l-7 3 7 2z" fill="#b0b0b0" />
        <g stroke="none" fill="#b0b0b0" fontFamily="Noto Sans" fontSize="15">
          <text x="1147" y="504">Z</text>
          <text x="1153" y="514">X</text>
          <text x="1119" y="526">y</text>
        </g>
      </svg>
      <div className="flex flex-col items-end pt-[37px] pr-[6px] font-['Noto_Sans',sans-serif] text-[17.450px] leading-[21px] text-[#111]">
        <div>1: Model</div>
        <div>Subcase 1 (Belastung) : Static Analysis : Frame 4</div>
      </div>
      <svg className="absolute top-[604px] left-[694px]" width="50" height="22" viewBox="1004 794 50 22">
        <path d="M1006 808.500h15M1017.500 808v-8" stroke="#444" strokeWidth="1.300" />
        <path d="M1015.500 801.500l2-4 2 4z" fill="#444" />
        <path d="M1025 807.500h7l-3.500 5z" fill="#b8b8b8" />
        <circle cx="1042" cy="804" r="5" fill="none" stroke="#3a3a3a" strokeWidth="3.600" />
        <circle cx="1042" cy="804" r="7.600" fill="none" stroke="#3a3a3a" strokeWidth="3" strokeDasharray="3 2.970" strokeDashoffset="1.500" />
      </svg>
    </div>
  );
}

function BottomPanel() {
  return (
    <div className="flex h-[240px]">
      <div className="flex flex-1 flex-col pt-[31px] pl-[20px]">
        <div className="flex h-[26px] items-center">
          <div className={`h-full w-[1444px] bg-white ${sunken}`} />
          <div className="ml-[6px] flex items-center gap-[7px]">
            <CheckBox checked={false} />
            <span className="tracking-[-0.100px]">Overlay</span>
          </div>
        </div>
        <div className="mt-[4px] flex h-[26px] items-center">
          <div className={`h-full w-[1444px] bg-white ${sunken}`} />
          <svg className="ml-[8px]" width="17" height="16" viewBox="0 0 17 16" fill="#f5f5f5" stroke="#444">
            <path d="M0.500 3.500h6v8h-6zM3.500 4.500h6v9h-6zM6.500 6.500h7v9h-7z" />
            <path d="M8.500 9.500h3M8.500 11.500h3M8.500 13.500h3" strokeWidth="0.800" />
            <path d="M8 2q3-3 5 1M15 0v4h-4" fill="none" stroke="#222" strokeWidth="1.300" />
          </svg>
        </div>
        <div className="mt-[77px] flex h-[28px] items-center pl-[967px] tracking-[-0.200px]">
          <span className="w-[165px]">Result-Math template:</span>
          <Combo className="h-[28px] w-[152px]" text="Advanced" />
          <div className={`ml-[6px] flex h-[28px] w-[131px] items-center justify-center pr-[4px] pb-px ${raised}`}>Reader Options...</div>
          <div className={`ml-[4px] flex h-[28px] w-[99px] items-center justify-center pr-[3px] pb-px ${raised}`}>Apply</div>
        </div>
      </div>
      <div className="mr-[2px] flex w-[13px] flex-col">
        <div className="flex h-[192px] justify-center bg-[#dadada] pt-[3px]"><Chevron up color="#222" /></div>
        <div className="mt-[7px] flex h-[12px] items-center justify-center bg-[#dadada]"><Chevron color="#222" /></div>
      </div>
    </div>
  );
}

/* ---------- expression builder ---------- */

function FieldRow({ label, value, more, className }: { label: string; value: string; more?: boolean; className: string }) {
  return (
    <div className={`flex h-[27px] items-center pl-[4px] ${className}`}>
      <span className="w-[124px]">{label}</span>
      <Combo className="h-full w-[256px]" text={value} />
      {more && (
        <div className={`ml-[7px] flex h-[24px] w-[24px] justify-center gap-[2px] pt-[8px] pr-[6px] ${raised}`}>
          <i className="size-[2px] shrink-0 bg-[#222]" />
          <i className="size-[2px] shrink-0 bg-[#222]" />
          <i className="size-[2px] shrink-0 bg-[#222]" />
        </div>
      )}
    </div>
  );
}

function Dialog() {
  return (
    <div className="absolute top-[196px] left-[317px] flex h-[762px] w-[680px] flex-col border border-[#b0b0b0] bg-[#f5f5f5] tracking-[-0.120px] text-[#222]">
      <div className="flex h-[36px] items-center pl-[6px]">
        <span className="w-[141px] text-[15px]">Expression Builder</span>
        <div className="mt-px h-[10px] w-[502px] bg-[radial-gradient(circle_at_1px_1px,#888_1px,transparent_1.300px)] bg-[size:6px_7px]" />
        <svg className="-mt-[3px] ml-[10px]" width="9" height="9" viewBox="0 0 9 9" fill="none" stroke="#555" strokeWidth="1.200">
          <path d="M0.500 0.500l8 8M8.500 0.500l-8 8" />
        </svg>
      </div>
      <div className="mt-px flex h-[26px] items-center pl-[13px]">
        <span className="w-[132px]">Label:</span>
        <div className={`flex h-full w-[497px] items-center bg-white pl-[2px] ${sunken}`}>Expression 1</div>
        <svg className="ml-[4px]" width="16" height="16" viewBox="0 0 16 16">
          <path d="M5.500 0.500h5v5h5v5h-5v5h-5v-5h-5v-5h5z" fill="#58b818" stroke="#3a8a10" />
          <path d="M6.500 1.500h3v5h5v1.500h-13V6.500h5z" fill="#a0e060" />
        </svg>
      </div>
      <div className="mt-[4px] flex h-[27px] items-center pl-[13px]">
        <span className="w-[132px]">Output:</span>
        <Combo className="h-full w-[495px]" text="All loadcases" />
      </div>

      <div className="mt-[16px] flex pl-[13px]">
        <div className="flex w-[434px] flex-col">
          <div className="flex h-[27px] items-center">
            <span className="w-[268px]">Select:</span>
            <span className="w-[91px] tracking-normal">Add resource:</span>
            <div className={`flex h-[26px] w-[27px] items-center justify-center ${raised}`}>
              <svg className="-mt-[3px] -ml-[3px]" width="17" height="14" viewBox="0 0 17 14">
                <path d="M1 12V4h4l1 1.500h6V7" fill="#ffff80" stroke="#000" />
                <path d="M1 12.500L4.500 7H16l-3.500 5.500z" fill="#808000" stroke="#000" />
                <path d="M8.500 2.500q4-3 6 1M15.500 0.500v3.500h-3.500" fill="none" stroke="#000" />
              </svg>
            </div>
          </div>
          <div className="flex h-[15px] items-center pl-[3px]">
            <DoubleChevron />
            <span className="ml-[5px] w-[56px] pt-px">Show all</span>
            <div className="h-px w-[315px] bg-[#888]" />
          </div>
          <FieldRow className="mt-[5px]" label="Table:" value="Coordinates" more />
          <FieldRow className="mt-[5px]" label="Table component:" value="Select..." />
          <FieldRow className="mt-[5px]" label="Resource:" value="model" />
          <div className={`mt-[7px] ml-[246px] flex h-[28px] w-[140px] items-center justify-center pr-[4px] pb-[2px] ${raised}`}>Insert</div>
        </div>
        <div className="relative flex w-[220px] flex-col">
          <div className="mt-px flex h-[27px] items-center">
            <span className="w-[52px] pt-px">Library:</span>
            <Combo className="h-full w-[167px]" text="Math" />
          </div>
          <div className="mt-[4px] ml-px flex h-[120px] w-[217px] border border-t-[#888] border-l-[#888] border-r-[#e0e0e0] border-b-[#e0e0e0] bg-white">
            <div className="flex flex-1 flex-col overflow-hidden pt-px pl-[4px] leading-[18px]">
              {["*", "+", "-", "/", "PrincipalAxisVector", "TensorFromScalar", "VectorFromScalar"].map((t) => (
                <div key={t} className="h-[18px] shrink-0">{t}</div>
              ))}
            </div>
            <div className="flex w-[14px] flex-col bg-[#f0f0f0]">
              <div className="flex h-[38px] justify-center bg-[#dadada] pt-[3px]"><Chevron up color="#888" /></div>
              <div className="mt-auto flex h-[14px] items-center justify-center bg-[#dadada]"><Chevron /></div>
            </div>
          </div>
          <div className="mt-[8px] ml-px flex h-[13px] items-center gap-[6px]">
            <CheckBox />
            <span className="tracking-[-0.200px]">Hide default arguments</span>
          </div>
          <div className="absolute top-[40px] left-[113px] flex h-[24px] w-[107px] items-center border border-black bg-[#ffffe1] pl-[3px] tracking-[-0.250px] whitespace-nowrap">
            Select from List.
          </div>
        </div>
      </div>

      <div className="mt-[4px] flex h-[16px] items-center pl-[11px]">
        <div className={`flex h-[15px] w-[15px] items-center justify-center ${sunken}`}><DoubleChevron /></div>
        <span className="ml-[2px] w-[120px] whitespace-nowrap">Hide operator help</span>
        <div className="-mt-[2px] h-px w-[514px] bg-[#888]" />
      </div>
      <div className="mt-[13px] ml-[16px] flex h-[159px] w-[646px] border-t border-b border-l border-t-[#888] border-b-[#d5d5d5] border-l-[#999]">
        <div className="flex-1" />
        <ScrollBar />
      </div>
      <div className="mt-[4px] ml-[13px] flex h-[9px] items-center">
        <div className="h-px w-[7px] bg-[#888]" />
        <div className="size-[9px] border border-[#ddd] border-r-[#111] border-b-[#111] bg-[#f5f5f5]" />
        <div className="h-px w-[637px] bg-[#888]" />
      </div>
      <div className="mt-px ml-[13px] h-[17px] leading-[16px]">Expression:</div>
      <div className="flex h-[26px] items-center pl-[18px]">
        <CheckBox />
        <span className="ml-[7px] w-[602px]">Display alias</span>
        <div className={`flex h-[26px] w-[26px] items-center justify-center ${raised}`}>
          <svg className="-mt-[5px] -ml-[5px]" width="16" height="16" viewBox="0 0 16 16">
            <path d="M8.500 6.500L13 1l2 1.500L10.500 8z" fill="#f0f020" stroke="#555" strokeWidth="0.800" />
            <path d="M4.500 8.500L9 4.500L12 7L7.500 12z" fill="#333" />
            <path d="M6 8.500l3 2.500" stroke="#aaa" />
            <path d="M1 12L4.500 8.500L7.500 11.500L4 15L1.500 14.500z" fill="#f07078" stroke="#333" strokeWidth="0.900" />
          </svg>
        </div>
      </div>
      <div className="ml-[12px] flex h-[183px] w-[653px] border border-r-0 border-t-[#888] border-b-[#ddd] border-l-[#999] bg-white">
        <div className="flex-1" />
        <ScrollBar />
      </div>
      <div className="mt-[11px] flex h-[26px] justify-end gap-[4px] pr-[8px]">
        <div className="flex w-[89px] items-center justify-center border border-[#bbb]">Apply</div>
        <div className="flex w-[89px] items-center justify-center border border-[#666]">OK</div>
        <div className="flex w-[89px] items-center justify-center border border-[#bbb]">Cancel</div>
      </div>
    </div>
  );
}

/* ---------- neighbouring drawing application ---------- */

const strip: React.ReactNode[] = [
  <path d="M4 1l9 8-4 .5 2.500 4.500-2 1-2.500-4.500L4 13z" fill="#fff" />,
  <g><path d="M2 15Q3 5 13 3" /><path d="M7 7l7 5-2 2-5-4z" fill="#ddd" /><path d="M1 1.500h4M1 3.500h3" /></g>,
  <path d="M2.500 2.500h11v11h-11z" strokeWidth="1.600" />,
  <circle cx="8" cy="8" r="6" strokeWidth="1.600" />,
  <path d="M6 2l2.500 2.500L12 3.500l-.5 3.500L15 8.500l-3.500 2L11 14l-3-2-4 1.500.5-4L1.500 7l4-1zM6 8q2-3 4 0t-2 3" strokeWidth="1.300" />,
  <g stroke="none"><path d="M2 5l6-3 6 2v8l-6 3-6-3z" fill="#eee" /><path d="M9 7l5-3v8l-5 3z" fill="#777" /></g>,
  <path d="M8 8q1.500-2 2.500 0t-2 3-5-2 2-6 7 .5 1 7-5 4-6.500-3-.5-8T8 1.500" strokeWidth="1.300" />,
  <g><path d="M2 2v12M2 13q6 3 7-3M1 4h5" /><path d="M8 8l1-5 5-2 1 4-4 4z" fill="#ddd" /></g>,
  <g><path d="M2 2q5-1 4 2T2 7" /><path d="M5 13l8-9 2 1.500-8 9z" fill="#ddd" /></g>,
  <g><path d="M2 3q4 1 1 6t3 5" /><path d="M7 14l1-6 5-5 2 3-4 5z" fill="none" strokeWidth="1.600" /></g>,
  null,
  <g><path d="M1.500 2.500h13v11h-13z" fill="#aaa" /><path d="M3 5l4 2 6-3-3 4 3 4" stroke="#222" strokeWidth="1.500" /></g>,
  <g><path d="M3 3q5 3 10 0-2 5 0 10-5-2-10 0 2-5 0-10z" fill="#999" /><path d="M1 1h3v3H1zM12 1h3v3h-3zM1 12h3v3H1zM12 12h3v3h-3z" fill="#ddd" stroke="none" /></g>,
  <path d="M2 14l7-8M9 4l3 3M10 5l4-4" strokeWidth="2.500" />,
  <g><path d="M5 6l5-4 4 6-5 5-4-1z" fill="#ddd" /><path d="M3 7v7" strokeWidth="2.500" /></g>,
  <path d="M1 14V11q3 0 4-4t5-4 4 3-4 1 0 4h5v3z" fill="#ddd" stroke="none" />,
  <g><path d="M6 8h8v6H6z" fill="#ddd" /><path d="M10 8V4M1 2h2M4 4h2M1 6h2" strokeWidth="1.500" /></g>,
  <g><path d="M5 8l5-5 4 3-5 5z" fill="#ddd" /><path d="M2 14h12M2 10l3 2" strokeWidth="1.500" /></g>,
  <g><path d="M4 11V4h8v7" /><path d="M2 11h4v4H2zM10 11h4v4h-4zM6 2h4v4H6z" fill="#ddd" stroke="none" /></g>,
  <path d="M5 1.500h6v13H5zM5 5h3M5 8h3M5 11h3" strokeWidth="1.300" />,
  <g strokeWidth="1.700"><circle cx="7.500" cy="7" r="5" /><path d="M11 11l3 3" /></g>,
  <path d="M2 5h6v9H2zM5 5V2h6l2 2v7H8" strokeWidth="1.400" />,
];

const marks = ["", " 50", " 25", "0", "25", "50", "75", "100", "125", "150", "175", "200", "225", "250", "275", "300", "325", "35"];

function Inkscape() {
  return (
    <div className="flex h-full w-[46px] shrink-0 flex-col overflow-hidden border-l border-[#9a9a9a] bg-[#2e373b]">
      <div className="flex h-[24px] shrink-0 items-center bg-white pl-[2px] font-['Open_Sans',sans-serif] text-[12px] whitespace-nowrap text-[#999]">
        <svg className="shrink-0" width="16" height="16" viewBox="0 0 16 16">
          <path d="M8 0.500L15.500 8Q13 10 10 10.500l2 2-4 3.500-4-3 2-2.500Q2 10 .5 8z" fill="#10182a" />
          <path d="M8 2l3.500 3.500-2 1-1.500-1-2 1.500-1.500-1.500z" fill="#cfe0f5" />
        </svg>
        <span className="ml-[6px]">*Ne</span>
      </div>
      <div className="h-[25px] shrink-0 pl-[7px] font-['Open_Sans',sans-serif] text-[12px] leading-[25px] text-[#ccc]">Datei</div>
      <div className="flex h-[28px] shrink-0 items-start gap-[11px] pt-[5px] pl-[7px]">
        <svg className="shrink-0" width="14" height="14" viewBox="0 0 14 14">
          <path d="M1 1h12v12H1z" fill="none" stroke="#bbb" strokeDasharray="2 1.500" />
          <path d="M3 7h5v4H3z" fill="#ddd" />
          <circle cx="9" cy="5" r="3" fill="#fff" />
        </svg>
        <svg className="shrink-0" width="14" height="14" viewBox="0 0 14 14">
          <path d="M1 1h12v12H1z" fill="none" stroke="#bbb" strokeDasharray="2 1.500" />
          <path d="M3 3.500h8M3 7h8M3 10.500h8" stroke="#eee" strokeWidth="2" />
        </svg>
      </div>
      <div className="flex h-[897px] shrink-0">
        <div className="flex w-[17px] shrink-0 flex-col">
          {strip.map((g, i) => (
            <div key={i} className={`flex h-[21px] shrink-0 items-center justify-center pr-px ${i === 0 ? "bg-[#1b5faa]" : ""}`}>
              {g ? (
                <svg width="14" height="14" viewBox="0 0 16 16" fill="none" stroke="#ddd">
                  {g}
                </svg>
              ) : (
                <span className="flex items-center gap-px font-['Open_Sans',sans-serif] text-[13px] leading-none font-bold text-[#ddd]">
                  A<i className="h-[11px] w-px bg-[#ddd]" />
                </span>
              )}
            </div>
          ))}
        </div>
        <div className="flex w-[19px] shrink-0 flex-col border-l border-[#252c30] pl-[2px]">
          <div className="flex h-[16px] shrink-0 justify-center pt-px">
            <svg width="10" height="12" viewBox="0 0 10 12">
              <path d="M0 5h10v7H0z" fill="#eee" />
              <path d="M2.500 5V3.500a2.500 2.500 0 0 1 5 0V5" fill="none" stroke="#eee" strokeWidth="1.500" />
            </svg>
          </div>
          <div className="h-[880px] overflow-hidden">
            <div className="-mt-[17px] flex flex-col">
              {marks.map((m, i) => (
                <div key={i} className="flex h-[51.100px] shrink-0">
                  <div className="flex w-[8px] shrink-0 flex-col items-end pt-[3px] font-['Open_Sans',sans-serif] text-[10px] leading-[11.500px] text-[#8d9598]">
                    {m.split("").map((c, k) => (
                      <span key={k} className="h-[11.500px]">{c}</span>
                    ))}
                  </div>
                  <svg className="-ml-[8px] shrink-0" width="16" height="51" viewBox="0 0 16 51" stroke="#8d9598">
                    <path d="M0 0.500H16M11 5.600h5M11 10.700h5M11 15.800h5M11 20.900h5M7 26h9M11 31.100h5M11 36.200h5M11 41.300h5M11 46.400h5" />
                  </svg>
                </div>
              ))}
            </div>
          </div>
        </div>
        <div className="mt-[16px] h-[879px] flex-1 bg-[#d2d2d2]" />
      </div>
      <div className="mt-[18px] flex h-[13px] shrink-0 pl-px">
        <svg width="11" height="13" viewBox="0 0 11 13" className="bg-white">
          <path d="M0 0l11 13M11 0L0 13" stroke="#8a2020" strokeWidth="1.500" />
        </svg>
        <span className="w-[13px] bg-black" />
        <span className="w-[14px] bg-[#1a1a1a]" />
      </div>
      <div className="flex h-[35px] shrink-0 flex-col items-end pt-[3px] pr-[2px] font-['Open_Sans',sans-serif] text-[11.500px] leading-[16.500px] text-[#bfc4c6]">
        <span>Füllung:</span>
        <span>Kontur:</span>
      </div>
      <div className="flex flex-1 items-start bg-[#1f1f1f] pt-[12px] pl-[15px]">
        <svg width="18" height="17" viewBox="0 0 18 17" fill="#fff">
          <path d="M0 2.500L7.300 1.500V8H0zM8.300 1.300L18 0V8H8.300zM0 9h7.300v6.500L0 14.500zM8.300 9H18v8l-9.700-1.300z" />
        </svg>
      </div>
    </div>
  );
}

export default function App() {
  return (
    <div className="relative flex h-[1080px] w-[1920px] overflow-hidden bg-[#f5f5f5] font-['Liberation_Sans',Arial,sans-serif] text-[14px] leading-none text-[#1a1a1a]">
      <Defs />
      <div className="flex w-[3px] shrink-0 flex-col bg-linear-to-b from-[#2c3a50] via-[#23232a] to-[#1d1d1f]">
        <div className="mt-[790px] h-[18px] bg-[#eee]" />
      </div>
      <div className="flex w-[1871px] shrink-0 flex-col">
        <TitleBar />
        <MenuBar />
        <Ribbon />
        <div className="flex flex-1">
          <Browser />
          <div className="flex flex-1 flex-col">
            <Viewport />
            <BottomPanel />
          </div>
        </div>
      </div>
      <Inkscape />
      <Dialog />
      <svg className="absolute top-[30px] left-[670px]" width="136" height="160" viewBox="670 30 136 160">
        <ellipse cx="737.300" cy="109.300" rx="62" ry="74" fill="none" stroke="#f00" strokeWidth="7" />
      </svg>
    </div>
  );
}
